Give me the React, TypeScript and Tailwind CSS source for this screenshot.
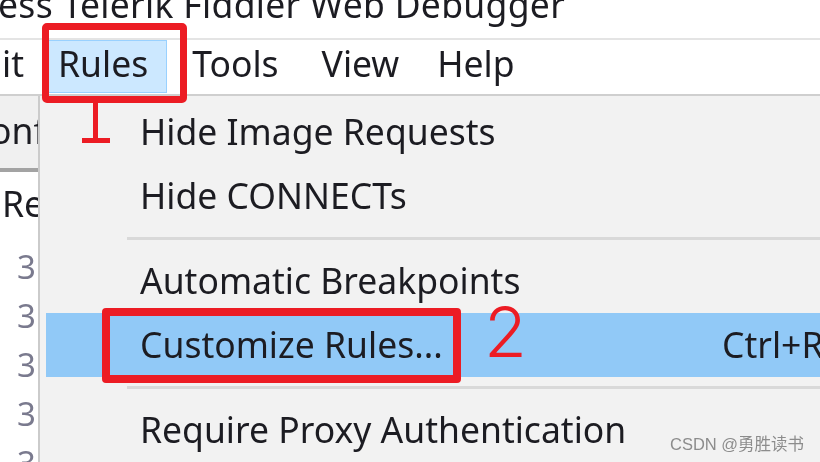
const menuFont = "font-['Noto_Sans','Open_Sans',sans-serif]";

function Separator() {
  return (
    <div className="flex h-[21px] items-center pl-[81px]">
      <div className="h-[3px] w-full bg-[#d9d9d9]" />
    </div>
  );
}

function MenuItem({
  label,
  shortcut,
  active,
}: {
  label: string;
  shortcut?: string;
  active?: boolean;
}) {
  return (
    <div
      className={`flex h-[64px] items-center overflow-hidden whitespace-nowrap pl-[94px] leading-none ${
        active ? "bg-[#91c9f7]" : ""
      }`}
    >
      <span className="w-[582px] shrink-0">{label}</span>
      {shortcut && <span>{shortcut}</span>}
    </div>
  );
}

export default function App() {
  return (
    <div
      className={`relative h-[462px] w-[820px] overflow-hidden bg-[#f0f0f0] text-[35.5px] text-[#1c1c22] blur-[0.4px] ${menuFont}`}
    >
      {/* window title, cut off at the top */}
      <div className="h-[40px] overflow-hidden border-b-2 border-[#e4e4e4] bg-white">
        <div className="-ml-[2px] -mt-[13px] whitespace-nowrap leading-none tracking-[0.3px]">
          ess Telerik Fiddler Web Debugger
        </div>
      </div>

      {/* menu bar */}
      <div className="flex h-[56px] items-stretch whitespace-nowrap border-b-2 border-[#cfcfcf] bg-white pl-[2px] leading-none">
        <span className="pt-[6px]">it</span>
        <span className="ml-[18px] mb-[1px] border border-[#99d1ff] bg-[#cce8ff] pl-[15px] pr-[18px] pt-[5px]">
          Rules
        </span>
        <span className="ml-[25px] pt-[6px]">Tools</span>
        <span className="ml-[43px] pt-[6px]">View</span>
        <span className="ml-[38px] pt-[6px]">Help</span>
      </div>

      <div className="flex h-[366px]">
        {/* session list behind the dropdown */}
        <div className="w-[40px] shrink-0 overflow-hidden border-r-2 border-[#cbcbcb] bg-white">
          <div className="h-[72px] bg-[#f0f0f0] pt-[17px]">
            <div className="-ml-[10px] whitespace-nowrap leading-none">onf</div>
          </div>
          <div className="h-[4px] bg-[#a3a3a3]" />
          <div className="ml-[2px] mt-[14px] whitespace-nowrap leading-none">
            Re
          </div>
          <div className="ml-[17px] mt-[20px] text-[33px] leading-[49px] text-[#7a7a8e]">
            <div>3</div>
            <div>3</div>
            <div>3</div>
            <div>3</div>
            <div>3</div>
          </div>
        </div>

        {/* Rules dropdown */}
        <div className="flex-1 bg-[#f2f2f2] pl-[6px] pt-[4px]">
          <MenuItem label="Hide Image Requests" />
          <MenuItem label="Hide CONNECTs" />
          <Separator />
          <MenuItem label="Automatic Breakpoints" />
          <MenuItem label="Customize Rules..." shortcut="Ctrl+R" active />
          <Separator />
          <MenuItem label="Require Proxy Authentication" />
        </div>
      </div>

      {/* red annotations */}
      <div className="absolute left-[42px] top-[23px] h-[80px] w-[145px] rounded-[5px] border-[7px] border-[#ec1c24]" />
      <div className="absolute left-[93px] top-[102px] h-[40px] w-[5px] bg-[#ec1c24]" />
      <div className="absolute left-[82px] top-[138px] h-[5px] w-[28px] bg-[#ec1c24]" />
      <div className="absolute left-[102px] top-[308px] h-[75px] w-[359px] rounded-[4px] border-[8px] border-[#ec1c24]" />
      <div className="absolute left-[484px] top-[307px] font-['Inter',sans-serif] text-[70px] font-light leading-[50px] text-[#ec1c24]">
        2
      </div>

      {/* watermark */}
      <div className="absolute left-[670px] top-[432px] whitespace-nowrap font-['Liberation_Sans','Noto_Sans_CJK_SC',sans-serif] text-[16.5px] text-[#8c8c8c]">
        CSDN @勇胜读书
      </div>
    </div>
  );
}
